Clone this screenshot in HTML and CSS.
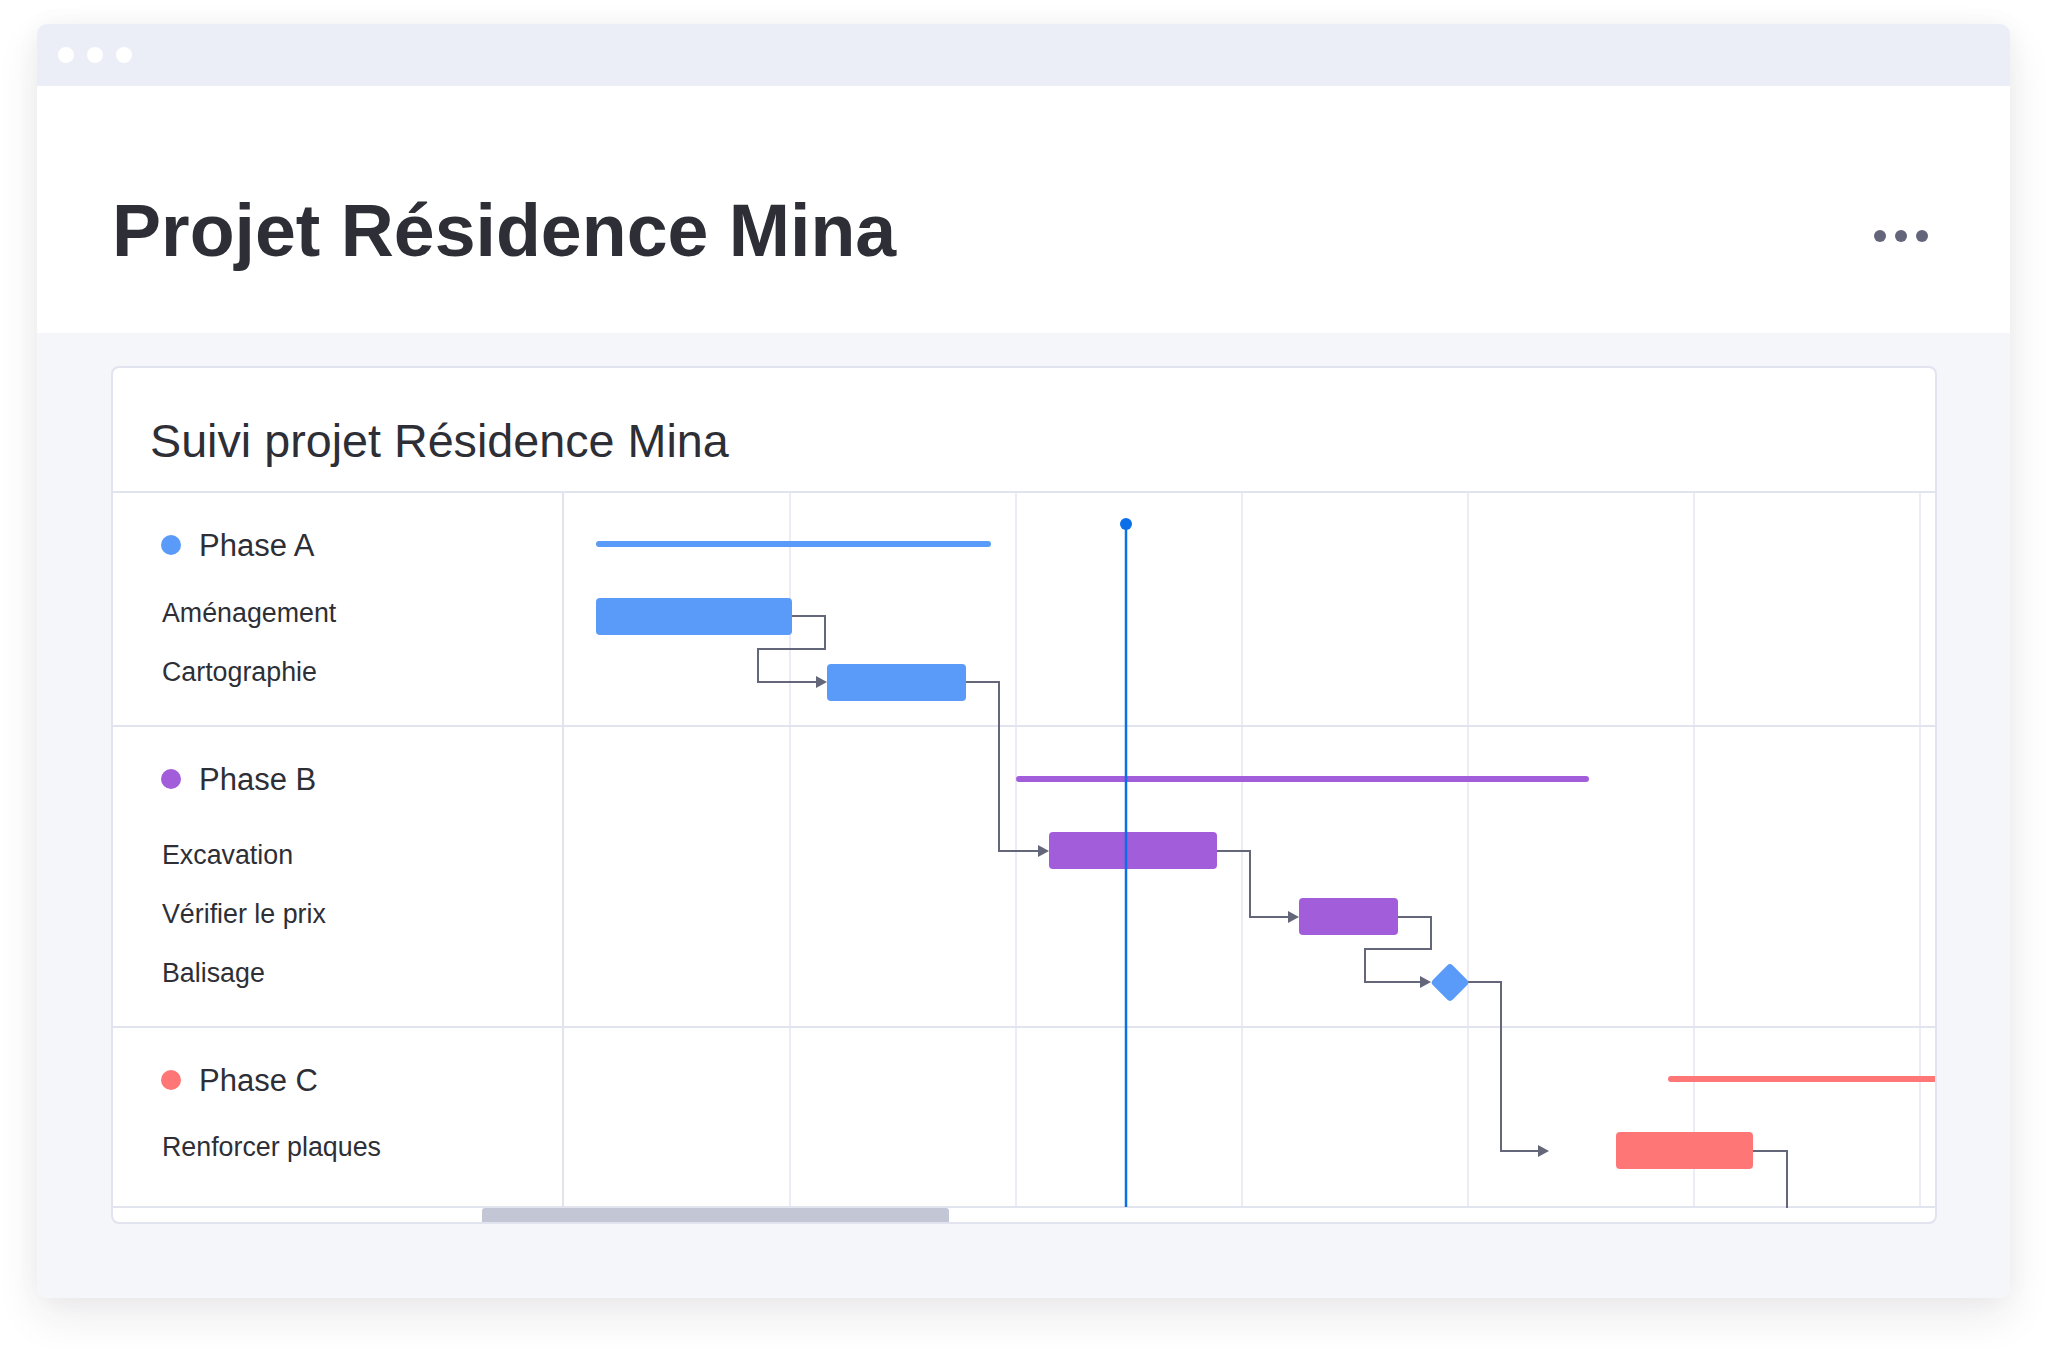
FILE: index.html
```html
<!DOCTYPE html>
<html lang="fr">
<head>
<meta charset="utf-8">
<title>Projet Résidence Mina</title>
<link rel="stylesheet" href="styles.css">
</head>
<body>
<div class="window">
  <div class="titlebar">
    <span class="tb-dot"></span><span class="tb-dot"></span><span class="tb-dot"></span>
  </div>
  <header class="header">
    <h1 class="title">Projet Résidence Mina</h1>
    <div class="menu"><span></span><span></span><span></span></div>
  </header>
  <main class="body">
    <section class="card">
      <div class="card-head"><h2 class="card-title">Suivi projet Résidence Mina</h2></div>
      <div class="gantt">
        <div class="labels">
          <div class="group group-a">
            <div class="phase"><span class="dot dot-blue"></span>Phase A</div>
            <div class="task">Aménagement</div>
            <div class="task">Cartographie</div>
          </div>
          <div class="group group-b">
            <div class="phase"><span class="dot dot-purple"></span>Phase B</div>
            <div class="task">Excavation</div>
            <div class="task">Vérifier le prix</div>
            <div class="task">Balisage</div>
          </div>
          <div class="group group-c">
            <div class="phase"><span class="dot dot-coral"></span>Phase C</div>
            <div class="task">Renforcer plaques</div>
          </div>
        </div>
        <svg class="chart" width="1371" height="715" viewBox="0 0 1371 715">
          <g class="grid">
            <line x1="226" y1="0" x2="226" y2="715"/>
            <line x1="452" y1="0" x2="452" y2="715"/>
            <line x1="678" y1="0" x2="678" y2="715"/>
            <line x1="904" y1="0" x2="904" y2="715"/>
            <line x1="1130" y1="0" x2="1130" y2="715"/>
            <line x1="1356" y1="0" x2="1356" y2="715"/>
          </g>
          <g class="rows">
            <line x1="0" y1="233" x2="1371" y2="233"/>
            <line x1="0" y1="534" x2="1371" y2="534"/>
            <line x1="0" y1="714" x2="1371" y2="714"/>
          </g>
          <g class="links">
            <path d="M228 123 H261 V156 H194 V189 H253"/>
            <polygon points="252,183 263,189 252,195"/>
            <path d="M402 189 H435 V358 H475"/>
            <polygon points="474,352 485,358 474,364"/>
            <path d="M653 358 H686 V424 H725"/>
            <polygon points="724,418 735,424 724,430"/>
            <path d="M834 424 H867 V456 H801 V489 H857"/>
            <polygon points="856,483 867,489 856,495"/>
            <path d="M904 489 H937 V658 H975"/>
            <polygon points="974,652 985,658 974,664"/>
            <path d="M1189 658 H1223 V715"/>
          </g>
          <rect class="blue" x="32" y="48" width="395" height="6" rx="3"/>
          <rect class="blue" x="32" y="105" width="196" height="37" rx="4"/>
          <rect class="blue" x="263" y="171" width="139" height="37" rx="4"/>
          <rect class="purple" x="452" y="283" width="573" height="6" rx="3"/>
          <rect class="purple" x="485" y="339" width="168" height="37" rx="4"/>
          <rect class="purple" x="735" y="405" width="99" height="37" rx="4"/>
          <rect class="blue" x="872" y="475.5" width="28" height="28" rx="4" transform="rotate(45 886 489.5)"/>
          <rect class="coral" x="1104" y="583" width="290" height="6" rx="3"/>
          <rect class="coral" x="1052" y="639" width="137" height="37" rx="4"/>
          <line class="today" x1="562" y1="31" x2="562" y2="714"/>
          <circle class="today-dot" cx="562" cy="31" r="6"/>
        </svg>
      </div>
      <div class="scroll"><div class="thumb"></div></div>
    </section>
  </main>
</div>
</body>
</html>
```

FILE: styles.css
```css
html, body {
  margin: 0;
  padding: 0;
  background: #ffffff;
}

body {
  width: 2048px;
  height: 1348px;
  overflow: hidden;
  font-family: "Liberation Sans", Arial, sans-serif;
  color: #2e2f36;
}

.window {
  margin: 24px 0 0 37px;
  width: 1973px;
  height: 1274px;
  border-radius: 10px;
  overflow: hidden;
  display: flex;
  flex-direction: column;
  box-shadow: 0 18px 44px rgba(30, 32, 60, 0.09), 0 0 24px rgba(30, 32, 60, 0.04);
}

.titlebar {
  height: 62px;
  flex: none;
  background: #eceef7;
  display: flex;
  align-items: center;
  gap: 13px;
  padding-left: 21px;
}

.tb-dot {
  width: 16px;
  height: 16px;
  border-radius: 50%;
  background: #ffffff;
}

.header {
  height: 247px;
  flex: none;
  box-sizing: border-box;
  background: #ffffff;
  display: flex;
  justify-content: space-between;
  align-items: flex-start;
  padding: 108px 82px 0 75px;
}

.title {
  margin: 0;
  font-size: 73.5px;
  line-height: 73px;
  font-weight: 700;
  color: #2e2f36;
}

.menu {
  display: flex;
  gap: 9px;
  margin-top: 36px;
}

.menu span {
  width: 12px;
  height: 12px;
  border-radius: 50%;
  background: #63657a;
}

.body {
  flex: 1;
  background: #f5f6fa;
  padding: 33px 73px 0 74px;
}

.card {
  height: 858px;
  box-sizing: border-box;
  border: 2px solid #e1e3ee;
  border-radius: 8px;
  background: #ffffff;
  overflow: hidden;
  display: flex;
  flex-direction: column;
}

.card-head {
  height: 125px;
  flex: none;
  box-sizing: border-box;
  border-bottom: 2px solid #e1e3ee;
  padding: 50px 0 0 37px;
}

.card-title {
  margin: 0;
  font-size: 46.7px;
  line-height: 46px;
  font-weight: 400;
  color: #2e2f36;
}

.gantt {
  height: 715px;
  flex: none;
  display: flex;
}

.labels {
  width: 451px;
  flex: none;
  box-sizing: border-box;
  border-right: 2px solid #e1e3ee;
}

.group {
  box-sizing: border-box;
  border-bottom: 2px solid #e1e3ee;
  padding: 37px 0 0 48px;
}

.group-a { height: 234px; }
.group-b { height: 301px; }
.group-c { height: 180px; }

.phase {
  display: flex;
  align-items: center;
  height: 32px;
  font-size: 31px;
  line-height: 32px;
  color: #2e2f36;
}

.dot {
  width: 20px;
  height: 20px;
  border-radius: 50%;
  margin-right: 18px;
  margin-top: -3px;
}

.dot-blue { background: #5a9bf9; }
.dot-purple { background: #a25ddb; }
.dot-coral { background: #ff7676; }

.task {
  font-size: 26.8px;
  line-height: 27px;
  height: 27px;
  color: #2e2f36;
  margin-top: 32px;
  padding-left: 1px;
  white-space: nowrap;
}

.phase + .task { margin-top: 38px; }
.group-b .phase + .task { margin-top: 46px; }
.group-c .phase + .task { margin-top: 37px; }

.chart {
  display: block;
  flex: none;
  overflow: hidden;
}

.grid line {
  stroke: #e4e6f1;
  stroke-width: 1.5;
}

.rows line {
  stroke: #e1e3ee;
  stroke-width: 2;
}

.links path {
  fill: none;
  stroke: #64667a;
  stroke-width: 2;
}

.links polygon {
  fill: #64667a;
}

.blue { fill: #5a9bf9; }
.purple { fill: #a25ddb; }
.coral { fill: #ff7676; }

.today {
  stroke: #0b6fe8;
  stroke-width: 2.5;
}

.today-dot { fill: #0b6fe8; }

.scroll {
  height: 14px;
  flex: none;
}

.thumb {
  margin-left: 369px;
  width: 467px;
  height: 14px;
  background: #c2c6d5;
  border-radius: 3px 3px 0 0;
}
```
